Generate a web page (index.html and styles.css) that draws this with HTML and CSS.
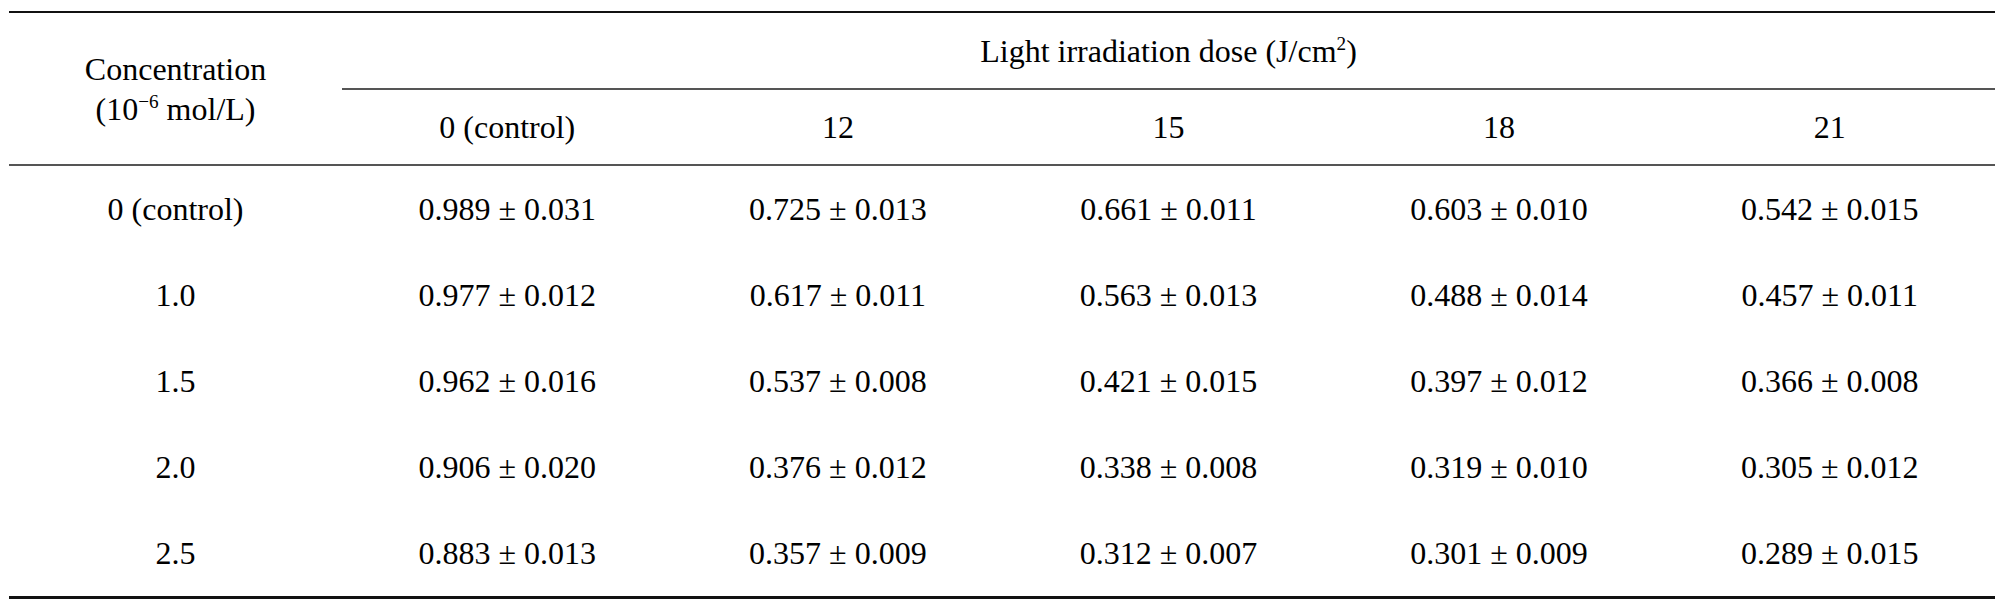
FILE: index.html
```html
<!DOCTYPE html>
<html lang="en">
<head>
<meta charset="utf-8">
<title>Table</title>
<link rel="stylesheet" href="styles.css">
</head>
<body>
<table class="data">
  <colgroup>
    <col class="c-first">
    <col class="c-val"><col class="c-val"><col class="c-val"><col class="c-val"><col class="c-val">
  </colgroup>
  <thead>
    <tr class="h1">
      <th rowspan="2" class="stub">Concentration<br>(10<sup>−6</sup> mol/L)</th>
      <th colspan="5" class="span">Light irradiation dose (J/cm<sup>2</sup>)</th>
    </tr>
    <tr class="h2">
      <th>0 (control)</th>
      <th>12</th>
      <th>15</th>
      <th>18</th>
      <th>21</th>
    </tr>
  </thead>
  <tbody>
    <tr><td>0 (control)</td><td>0.989 ± 0.031</td><td>0.725 ± 0.013</td><td>0.661 ± 0.011</td><td>0.603 ± 0.010</td><td>0.542 ± 0.015</td></tr>
    <tr><td>1.0</td><td>0.977 ± 0.012</td><td>0.617 ± 0.011</td><td>0.563 ± 0.013</td><td>0.488 ± 0.014</td><td>0.457 ± 0.011</td></tr>
    <tr><td>1.5</td><td>0.962 ± 0.016</td><td>0.537 ± 0.008</td><td>0.421 ± 0.015</td><td>0.397 ± 0.012</td><td>0.366 ± 0.008</td></tr>
    <tr><td>2.0</td><td>0.906 ± 0.020</td><td>0.376 ± 0.012</td><td>0.338 ± 0.008</td><td>0.319 ± 0.010</td><td>0.305 ± 0.012</td></tr>
    <tr><td>2.5</td><td>0.883 ± 0.013</td><td>0.357 ± 0.009</td><td>0.312 ± 0.007</td><td>0.301 ± 0.009</td><td>0.289 ± 0.015</td></tr>
  </tbody>
</table>
</body>
</html>
```
FILE: styles.css
```css
html, body {
  margin: 0;
  padding: 0;
  background: #ffffff;
}

body {
  padding: 11px 7px 0 9px;
  font-family: "Liberation Serif", "Times New Roman", serif;
  color: #000;
}

.data {
  width: 1986px;
  border-collapse: collapse;
  table-layout: fixed;
  font-size: 32px;
  border-top: 2px solid #111;
  border-bottom: 3px solid #111;
}

.c-first { width: 333px; }

.data th,
.data td {
  font-weight: normal;
  text-align: center;
  vertical-align: middle;
  padding: 0;
}

.h1 th { height: 73px; }

.h1 .stub {
  line-height: 40px;
  border-bottom: 2px solid #555;
}

.h1 .span {
  border-bottom: 2px solid #555;
  padding-top: 2px;
}

.h2 th {
  height: 74px;
  border-bottom: 2px solid #555;
}

.data tbody td {
  height: 86px;
}

sup {
  font-size: 0.6em;
  line-height: 0;
  vertical-align: 0.6em;
}
```
